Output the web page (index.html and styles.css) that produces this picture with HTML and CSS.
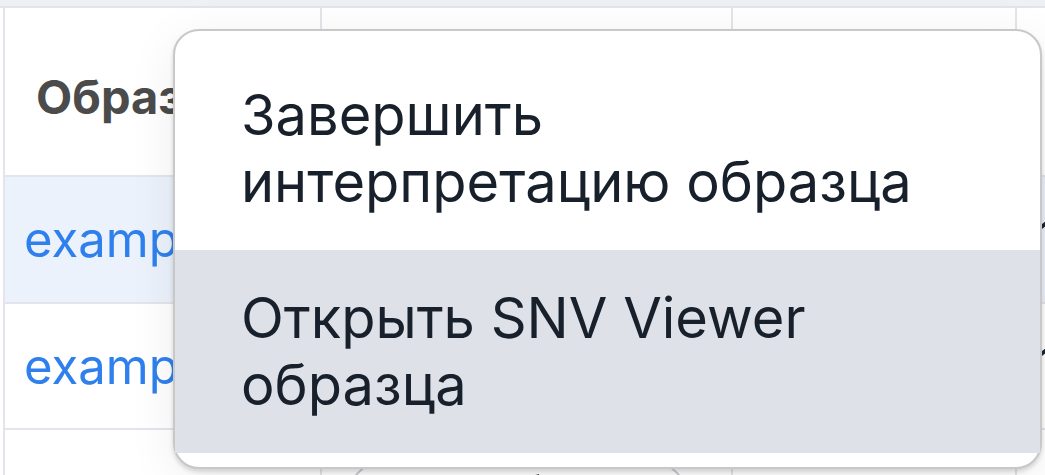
FILE: index.html
```html
<!DOCTYPE html>
<html lang="ru">
<head>
<meta charset="utf-8">
<link rel="stylesheet" href="styles.css">
</head>
<body>
<div class="page">
  <div class="topbar"></div>
  <div class="table">
    <div class="cell head">Образец</div>
    <div class="cell head">Пациент</div>
    <div class="cell head">Статус</div>
    <div class="cell head">Дата</div>

    <div class="cell row-sel"><a class="link">example_1</a></div>
    <div class="cell row-sel">Иванов</div>
    <div class="cell row-sel">Готов</div>
    <div class="cell row-sel dark">12.03</div>

    <div class="cell"><a class="link">example_2</a></div>
    <div class="cell">Петров</div>
    <div class="cell">Готов</div>
    <div class="cell dark">14.03</div>

    <div class="cell short"><a class="link">example_3</a></div>
    <div class="cell short"><span class="pill">В работе</span></div>
    <div class="cell short dark">Обработка</div>
    <div class="cell short dark">15.03</div>
  </div>

  <div class="menu">
    <div class="menu-item">Завершить<br>интерпретацию образца</div>
    <div class="menu-item active">Открыть SNV Viewer<br>образца</div>
  </div>
</div>
</body>
</html>
```

FILE: styles.css
```css
html, body {
  margin: 0;
  padding: 0;
  background: #ffffff;
}

.page {
  position: relative;
  width: 1045px;
  height: 475px;
  overflow: hidden;
  font-family: "Inter", "Noto Sans", sans-serif;
}

.topbar {
  height: 6px;
  background: #eef0f3;
  border-bottom: 2px solid #e1e4ea;
}

.table {
  display: grid;
  grid-template-columns: 317px 411px 284px 300px;
  grid-template-rows: 169px 127px 126px 60px;
  margin-left: 3px;
}

.cell {
  border-left: 2px solid #e3e5eb;
  border-bottom: 2px solid #e3e5eb;
  display: flex;
  align-items: center;
  padding-left: 19px;
  font-size: 49px;
  color: #1c2430;
  white-space: nowrap;
  overflow: hidden;
}

.head {
  font-weight: 700;
  color: #4b4b4b;
  padding-left: 31px;
  padding-top: 10px;
  font-size: 47px;
}

.row-sel {
  background: #ebf2fc;
}

.link {
  color: #2f80ed;
}

.short {
  align-items: flex-start;
  padding-top: 36px;
}

.pill {
  border: 2px solid #c9ccd3;
  border-radius: 40px;
  padding: 0 60px;
  margin-top: -4px;
  margin-left: 8px;
}

.dark {
  color: #1c2430;
}

.menu {
  position: absolute;
  left: 173px;
  top: 29px;
  width: 869px;
  height: 440px;
  background: #ffffff;
  border: 2px solid #c8c8c8;
  border-radius: 26px;
  box-shadow: 0 3px 4px rgba(0, 0, 0, 0.14), 0 10px 50px rgba(0, 0, 0, 0.07);
  padding: 16px 0 14px;
  box-sizing: border-box;
  display: flex;
  flex-direction: column;
}

.menu-item {
  padding: 31px 66px;
  font-size: 56px;
  line-height: 67px;
  color: #17202b;
  flex: 1;
  display: flex;
  flex-direction: column;
  justify-content: center;
}

.menu-item.active {
  background: #dfe1e9;
}
```
